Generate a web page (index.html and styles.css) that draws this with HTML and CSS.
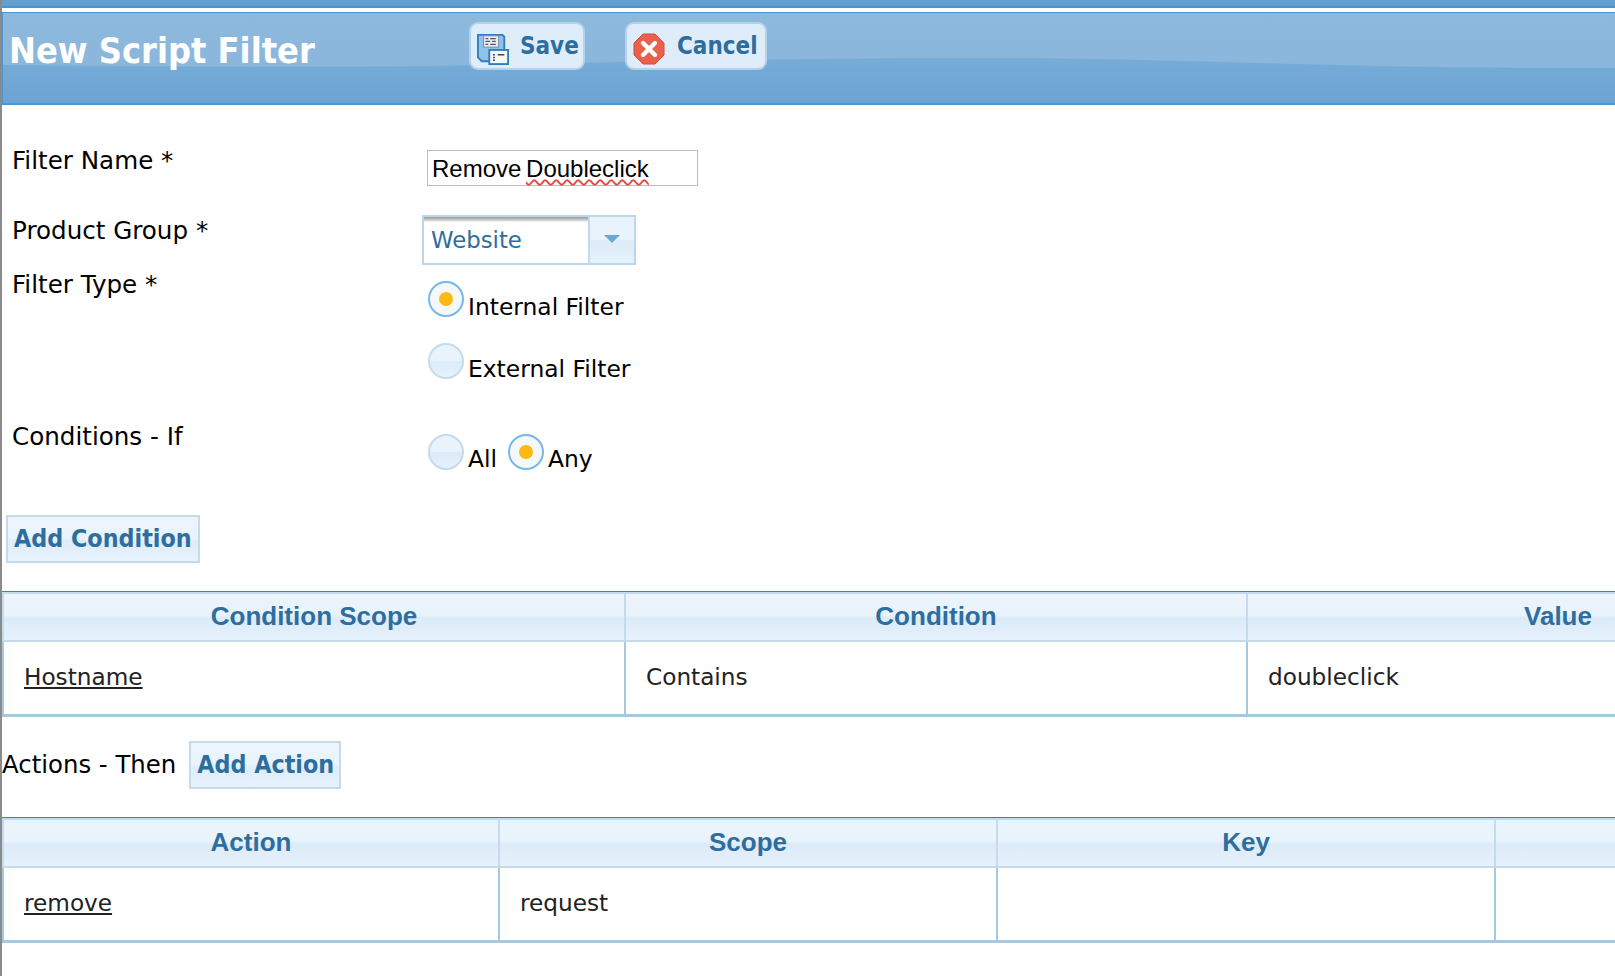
FILE: index.html
```html
<!DOCTYPE html>
<html lang="en">
<head>
<meta charset="utf-8">
<title>New Script Filter</title>
<link rel="stylesheet" href="styles.css">
</head>
<body>
<div class="page">
  <div class="topband"></div>
  <header class="titlebar">
    <svg class="wave" viewBox="0 0 1612 90" preserveAspectRatio="none" aria-hidden="true">
      <defs>
        <linearGradient id="waveFill" x1="0" y1="0" x2="0" y2="1">
          <stop offset="0" stop-color="#77acd7"/>
          <stop offset="1" stop-color="#6ba3d3"/>
        </linearGradient>
      </defs>
      <path d="M0 52C150 53 250 55 420 53C600 50 800 44 1010 45C1200 46 1350 56 1612 55V90H0z" fill="url(#waveFill)"/>
    </svg>
    <h1 class="title">New Script Filter</h1>
    <a class="toolbtn save-btn">
      <svg class="icon" viewBox="0 0 34 34" width="32" height="32">
        <path d="M1 2h26l2 2v26H5l-4-4z" fill="#8fc3ea" stroke="#2f7fc0" stroke-width="2"/>
        <rect x="7" y="3" width="16" height="12" fill="#e8edf0" stroke="#6f8ea8"/>
        <path d="M9 6h3M14 6h6M9 9h5M16 9h4M9 12h3M14 12h6" stroke="#556" stroke-width="1.3"/>
        <rect x="13" y="18" width="20" height="15" fill="#f4f7f8" stroke="#2f7fc0" stroke-width="2"/>
        <path d="M17 23h2M17 26h2M17 29h2M22 23h7" stroke="#445" stroke-width="1.6"/>
      </svg>
      <span>Save</span>
    </a>
    <a class="toolbtn cancel-btn">
      <svg class="icon" viewBox="0 0 32 32" width="32" height="32">
        <path d="M10 1h12l9 9v12l-9 9H10l-9-9V10z" fill="#e9604c" stroke="#d94a36"/>
        <path d="M10 10l12 12M22 10L10 22" stroke="#fff" stroke-width="4.4" stroke-linecap="round"/>
      </svg>
      <span>Cancel</span>
    </a>
  </header>

  <main class="form">
    <div class="row row-name">
      <div class="label">Filter Name *</div>
      <div class="field">
        <div class="textbox">Remove <span class="misspelled">Doubleclick</span></div>
      </div>
    </div>
    <div class="row row-group">
      <div class="label">Product Group *</div>
      <div class="field">
        <div class="select">
          <div class="select-value">Website</div>
          <div class="select-arrow"><span class="caret"></span></div>
        </div>
      </div>
    </div>
    <div class="row row-type">
      <div class="label">Filter Type *</div>
      <div class="field stack">
        <div class="radio-line"><span class="radio on"></span><span class="radio-text">Internal Filter</span></div>
        <div class="radio-line"><span class="radio"></span><span class="radio-text">External Filter</span></div>
      </div>
    </div>
    <div class="row row-cond">
      <div class="label">Conditions - If</div>
      <div class="field inline">
        <div class="radio-line"><span class="radio"></span><span class="radio-text">All</span></div>
        <div class="radio-line"><span class="radio on"></span><span class="radio-text">Any</span></div>
      </div>
    </div>
  </main>

  <a class="ui-btn add-condition">Add Condition</a>

  <table class="grid grid-cond">
    <thead>
      <tr><th>Condition Scope</th><th>Condition</th><th>Value</th></tr>
    </thead>
    <tbody>
      <tr><td><a class="link">Hostname</a></td><td>Contains</td><td>doubleclick</td></tr>
    </tbody>
  </table>

  <div class="actions-bar">
    <span class="actions-label">Actions - Then</span>
    <a class="ui-btn add-action">Add Action</a>
  </div>

  <table class="grid grid-act">
    <thead>
      <tr><th>Action</th><th>Scope</th><th>Key</th><th></th></tr>
    </thead>
    <tbody>
      <tr><td><a class="link">remove</a></td><td>request</td><td></td><td></td></tr>
    </tbody>
  </table>
</div>
</body>
</html>
```

FILE: styles.css
```css
html, body {
  margin: 0;
  padding: 0;
  height: 100%;
  overflow: hidden;
  background: #fff;
}
.page {
  height: 976px;
  overflow: hidden;
  border-left: 2px solid #8a8a8a;
  font-family: "DejaVu Sans", sans-serif;
  font-size: 24px;
  color: #000;
}
.topband {
  height: 6px;
  background: #659fd0;
  border-bottom: 2px solid #4a95d3;
  margin-bottom: 4px;
}
.titlebar {
  position: relative;
  display: flex;
  align-items: flex-start;
  box-sizing: border-box;
  height: 93px;
  border-top: 1px solid #4a95d3;
  border-bottom: 2px solid #4a95d3;
  border-left: 1px solid #4a95d3;
  background: linear-gradient(#8db9dd, #88b5da);
}
.wave {
  position: absolute;
  inset: 0;
  width: 100%;
  height: 100%;
}
.title, .toolbtn {
  position: relative;
}
.title {
  margin: 15px 0 0 6px;
  width: 460px;
  flex: none;
  color: #fff;
  font-family: "DejaVu Sans Condensed", "DejaVu Sans", sans-serif;
  font-size: 35.8px;
  line-height: 46px;
  font-weight: 700;
}
.toolbtn {
  display: flex;
  align-items: center;
  box-sizing: border-box;
  height: 48px;
  margin-top: 9px;
  padding: 0 6px;
  background: #dfedfb;
  border: 2px solid #b5d2ea;
  border-radius: 9px;
  color: #2e6e9e;
  font-family: "DejaVu Sans Condensed", "DejaVu Sans", sans-serif;
  font-weight: 700;
  font-size: 24px;
}
.icon {
  flex: none;
  margin-top: 5px;
}
.save-btn {
  width: 116px;
  gap: 11px;
}
.cancel-btn {
  width: 142px;
  margin-left: 40px;
  gap: 12px;
}
.row {
  display: grid;
  grid-template-columns: 410px 1fr;
  padding-left: 10px;
}
.label {
  line-height: 30px;
  padding-top: 1px;
  font-size: 24.6px;
  white-space: nowrap;
}
.row-name {
  margin-top: 40px;
  height: 40px;
}
.row-name .field {
  padding: 5px 0 0 5px;
}
.textbox {
  box-sizing: border-box;
  width: 271px;
  height: 36px;
  border: 1px solid #bcbcbc;
  padding-left: 4px;
  font-family: "Liberation Sans", sans-serif;
  font-size: 24px;
  line-height: 36px;
  word-spacing: -2px;
}
.misspelled {
  text-decoration: underline wavy #e8473f 2px;
  text-underline-offset: 2px;
}
.row-group {
  margin-top: 30px;
  height: 50px;
}
.select {
  display: flex;
  box-sizing: border-box;
  width: 214px;
  height: 50px;
  border: 2px solid #bcd6ea;
}
.select-value {
  flex: 1;
  box-sizing: border-box;
  padding-left: 7px;
  color: #2e6e9e;
  font-size: 22.8px;
  line-height: 47px;
  background: linear-gradient(#9c9c9c 0, #c8c8c8 3px, #fff 5px);
}
.select-arrow {
  width: 44px;
  display: flex;
  align-items: center;
  justify-content: center;
  border-left: 2px solid #c5dbec;
  background: linear-gradient(#e9f3fc 0%, #e9f3fc 48%, #dcebf9 52%, #e6f1fb 100%);
}
.caret {
  width: 0;
  height: 0;
  border-left: 8px solid transparent;
  border-right: 8px solid transparent;
  border-top: 8px solid #6da8d4;
  margin-bottom: 3px;
}
.row-type {
  margin-top: 4px;
}
.stack {
  display: flex;
  flex-direction: column;
  gap: 26px;
  padding: 12px 0 0 6px;
}
.radio-line {
  display: flex;
  align-items: flex-start;
  gap: 4px;
  height: 36px;
}
.radio {
  box-sizing: border-box;
  width: 36px;
  height: 36px;
  border-radius: 50%;
  border: 2px solid #c5dbec;
  background: linear-gradient(#e9f3fc 0%, #e9f3fc 48%, #dcebf9 52%, #e6f1fb 100%);
  display: flex;
  align-items: center;
  justify-content: center;
  flex: none;
}
.radio.on {
  border-color: #79b7e7;
  background: #f5f8f9;
}
.radio.on::after {
  content: "";
  width: 14px;
  height: 14px;
  border-radius: 50%;
  background: #fdb813;
}
.radio-text {
  font-size: 23.4px;
  line-height: 30px;
  margin-top: 11px;
  white-space: nowrap;
}
.row-cond {
  margin-top: 44px;
}
.row-cond .label {
  margin-top: -2px;
}
.inline {
  display: flex;
  gap: 11px;
  padding: 11px 0 0 6px;
}
.inline .radio-text {
  margin-top: 10px;
}
.ui-btn {
  display: inline-block;
  box-sizing: border-box;
  height: 48px;
  line-height: 44px;
  padding: 0 6px;
  border: 2px solid #c5dbec;
  background: linear-gradient(#ecf5fd 0%, #e9f3fc 48%, #deedfa 55%, #e8f2fc 100%);
  color: #2e6e9e;
  font-family: "DejaVu Sans Condensed", "DejaVu Sans", sans-serif;
  font-weight: 700;
  font-size: 24.8px;
  white-space: nowrap;
}
.add-condition {
  display: block;
  width: 194px;
  margin: 45px 0 0 4px;
}
.add-action {
  width: 152px;
}
.grid {
  border-collapse: separate;
  border-spacing: 0;
  table-layout: fixed;
  border-top: 1px solid #4f7bab;
  margin-top: 28px;
}
.grid-cond {
  width: 1866px;
}
.grid-act {
  width: 1990px;
}
.grid-cond th:first-child {
  width: 622px;
}
.grid-act th:first-child {
  width: 496px;
}
.grid th {
  height: 50px;
  box-sizing: border-box;
  padding: 0 0 2px;
  border-top: 2px solid #c5dbec;
  border-bottom: 2px solid #c5dbec;
  border-left: 2px solid #c5dbec;
  background: linear-gradient(#ebf4fd 0%, #e9f3fc 46%, #dcebf9 52%, #e6f1fb 100%);
  color: #2e6e9e;
  font-family: "Liberation Sans", sans-serif;
  font-weight: 700;
  font-size: 26px;
  text-align: center;
}
.grid td {
  height: 75px;
  box-sizing: border-box;
  padding: 0 0 4px 20px;
  border-left: 2px solid #a6c9e2;
  border-bottom: 3px solid #a6c9e2;
  color: #222;
  font-size: 23.2px;
}
.link {
  text-decoration: underline;
}
.actions-bar {
  display: flex;
  align-items: center;
  gap: 13px;
  margin-top: 24px;
  height: 48px;
}
.actions-label {
  font-size: 24.4px;
  white-space: nowrap;
  margin-bottom: 2px;
}
```
